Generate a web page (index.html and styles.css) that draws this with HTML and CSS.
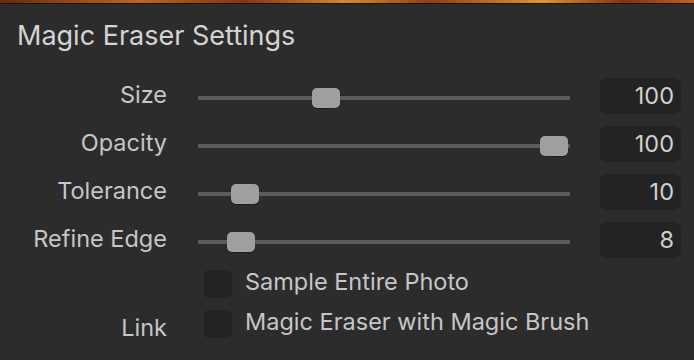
FILE: index.html
```html
<!DOCTYPE html>
<html>
<head>
<meta charset="utf-8">
<link rel="stylesheet" href="styles.css">
</head>
<body>
<div class="strip"></div>
<div class="panel">
  <h1 class="title">Magic Eraser Settings</h1>
  <div class="grid">
    <div class="label">Size</div>
    <div class="slider"><div class="track"></div><div class="thumb" style="left:114px"></div></div>
    <div class="value">100</div>

    <div class="label">Opacity</div>
    <div class="slider"><div class="track"></div><div class="thumb" style="left:342px"></div></div>
    <div class="value">100</div>

    <div class="label">Tolerance</div>
    <div class="slider"><div class="track"></div><div class="thumb" style="left:33px"></div></div>
    <div class="value">10</div>

    <div class="label">Refine Edge</div>
    <div class="slider"><div class="track"></div><div class="thumb" style="left:29px"></div></div>
    <div class="value">8</div>
  </div>
  <div class="checks">
    <div class="label"></div>
    <div class="check-row"><span class="box"></span><span class="check-text">Sample Entire Photo</span></div>
    <div class="label">Link</div>
    <div class="check-row"><span class="box"></span><span class="check-text">Magic Eraser with Magic Brush</span></div>
  </div>
</div>
</body>
</html>
```

FILE: styles.css
```css
html, body {
  margin: 0;
  padding: 0;
  background: #2c2c2c;
  width: 694px;
  height: 360px;
  overflow: hidden;
  font-family: Inter, "Noto Sans", sans-serif;
  color: #c8c8c8;
}
.strip {
  height: 3px;
  background: linear-gradient(90deg, #6a2a0e 0%, #c0641c 20%, #8a3210 35%, #d88a2a 50%, #9a3a12 62%, #e0962c 78%, #8a2e10 90%, #c06020 100%);
  border-bottom: 1px solid #1c120a;
}
.panel {
  padding: 0 0 0 17px;
}
.title {
  margin: 0;
  padding-top: 15px;
  height: 51px;
  box-sizing: border-box;
  font-size: 27px;
  font-weight: 400;
  color: #d4d4d4;
  line-height: 34px;
}
.grid {
  display: grid;
  grid-template-columns: 150px 372px 80px;
  column-gap: 31px;
  grid-auto-rows: 48px;
  align-items: center;
  margin-top: 17px;
}
.grid .value {
  margin-left: -1px;
}
.grid .label {
  margin-top: -2px;
}
.label {
  text-align: right;
  font-size: 23.5px;
  line-height: 28px;
  color: #c6c6c6;
}
.slider {
  position: relative;
  height: 20px;
  display: flex;
  align-items: center;
  margin-top: 4px;
}
.track {
  width: 100%;
  height: 4px;
  background: #5c5c5c;
}
.thumb {
  position: absolute;
  top: 0;
  width: 28px;
  height: 20px;
  border-radius: 5px;
  background: #9f9f9f;
  box-shadow: 0 1px 1px rgba(0,0,0,0.3);
}
.value {
  height: 36px;
  box-sizing: border-box;
  background: #232323;
  border-radius: 7px;
  text-align: right;
  padding-right: 7px;
  font-size: 23.5px;
  line-height: 35px;
  color: #d0d0d0;
}
.checks {
  display: grid;
  grid-template-columns: 150px auto;
  column-gap: 37px;
  grid-auto-rows: 40px;
  align-items: center;
}
.checks .label {
  padding-top: 8px;
}
.check-row {
  display: flex;
  align-items: center;
  gap: 13px;
}
.box {
  width: 28px;
  height: 28px;
  border-radius: 5px;
  background: #232323;
}
.check-text {
  font-size: 23.5px;
  line-height: 28px;
  color: #c6c6c6;
  margin-top: -4px;
}
```
